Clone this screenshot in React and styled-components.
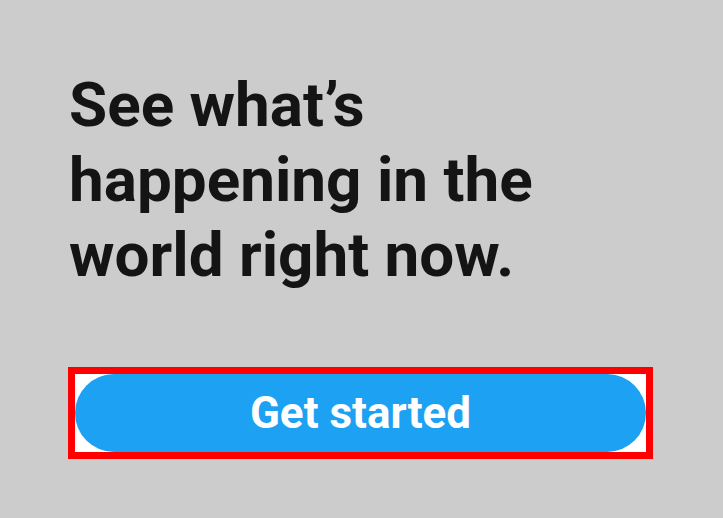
import React from "react"
import styled, { createGlobalStyle } from "styled-components"

const GlobalStyle = createGlobalStyle`
  html, body {
    margin: 0;
    padding: 0;
    background: #cccccc;
  }
  body {
    font-family: Roboto, "Liberation Sans", Arial, sans-serif;
  }
`

const Page = styled.main`
  display: flex;
  flex-direction: column;
  align-items: flex-start;
  width: 723px;
  height: 518px;
  padding: 67px 0 0 68px;
  box-sizing: border-box;
  background: #cccccc;
  overflow: hidden;
`

const Headline = styled.h1`
  margin: 0 0 0 1px;
  font-family: Roboto, "Liberation Sans", Arial, sans-serif;
  font-weight: 700;
  font-size: 62px;
  line-height: 75px;
  letter-spacing: 0;
  color: #141414;
`

const Highlight = styled.div`
  display: flex;
  width: 585px;
  height: 92px;
  margin-top: 75px;
  border: 7px solid #ff0000;
  box-sizing: border-box;
  background: #ffffff;
`

const StartButton = styled.button`
  flex: 1;
  margin: 0;
  padding: 0;
  border: none;
  border-radius: 39px;
  background: #1da1f2;
  color: #ffffff;
  font-family: Roboto, "Liberation Sans", Arial, sans-serif;
  font-weight: 700;
  font-size: 44px;
  cursor: pointer;
`

const App = () => (
  <>
    <GlobalStyle />
    <Page>
      <Headline>
        See what’s
        <br />
        happening in the
        <br />
        world right now.
      </Headline>
      <Highlight>
        <StartButton>Get started</StartButton>
      </Highlight>
    </Page>
  </>
)

export default App
